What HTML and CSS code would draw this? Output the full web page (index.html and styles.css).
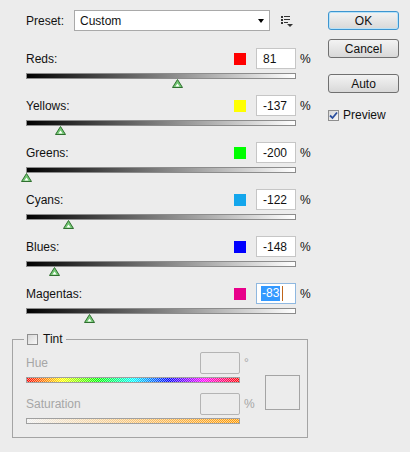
FILE: index.html
```html
<!DOCTYPE html>
<html lang="en">
<head>
  <meta charset="UTF-8">
  <title>Black &amp; White</title>
  <link rel="stylesheet" href="styles.css">
</head>
<body>

  <div class="dialog">
    <div class="main">

      <div class="preset-row">
        <span class="preset-label">Preset:</span>
        <div class="select">
          <span class="select-value">Custom</span>
          <span class="select-arrow"></span>
        </div>
        <svg class="preset-menu" width="12" height="12" viewBox="0 0 12 12">
          <g fill="#333">
            <rect x="0" y="0" width="2" height="2"/>
            <rect x="3" y="0" width="6" height="1"/>
            <rect x="0" y="3" width="2" height="2"/>
            <rect x="3" y="3" width="6" height="1"/>
            <rect x="0" y="6" width="2" height="2"/>
            <rect x="3" y="6" width="4" height="1"/>
            <path d="M6 8h6l-3 3z"/>
          </g>
        </svg>
      </div>

      <div class="channels">
        <div class="channel">
          <div class="channel-head">
            <span class="channel-name">Reds:</span>
            <span class="swatch swatch-reds"></span>
            <span class="field">81</span>
            <span class="unit">%</span>
          </div>
          <div class="slider">
            <svg class="thumb" style="left:145px" width="11" height="9" viewBox="0 0 11 9"><path d="M5.5 .5 10.5 8.5H.5Z" fill="#74c874" stroke="#2f6f2f"/><path d="M5.5 4.5 7.5 7.5H3.5Z" fill="#fff"/></svg>
          </div>
        </div>

        <div class="channel">
          <div class="channel-head">
            <span class="channel-name">Yellows:</span>
            <span class="swatch swatch-yellows"></span>
            <span class="field">-137</span>
            <span class="unit">%</span>
          </div>
          <div class="slider">
            <svg class="thumb" style="left:28px" width="11" height="9" viewBox="0 0 11 9"><path d="M5.5 .5 10.5 8.5H.5Z" fill="#74c874" stroke="#2f6f2f"/><path d="M5.5 4.5 7.5 7.5H3.5Z" fill="#fff"/></svg>
          </div>
        </div>

        <div class="channel">
          <div class="channel-head">
            <span class="channel-name">Greens:</span>
            <span class="swatch swatch-greens"></span>
            <span class="field">-200</span>
            <span class="unit">%</span>
          </div>
          <div class="slider">
            <svg class="thumb" style="left:-6px" width="11" height="9" viewBox="0 0 11 9"><path d="M5.5 .5 10.5 8.5H.5Z" fill="#74c874" stroke="#2f6f2f"/><path d="M5.5 4.5 7.5 7.5H3.5Z" fill="#fff"/></svg>
          </div>
        </div>

        <div class="channel">
          <div class="channel-head">
            <span class="channel-name">Cyans:</span>
            <span class="swatch swatch-cyans"></span>
            <span class="field">-122</span>
            <span class="unit">%</span>
          </div>
          <div class="slider">
            <svg class="thumb" style="left:36px" width="11" height="9" viewBox="0 0 11 9"><path d="M5.5 .5 10.5 8.5H.5Z" fill="#74c874" stroke="#2f6f2f"/><path d="M5.5 4.5 7.5 7.5H3.5Z" fill="#fff"/></svg>
          </div>
        </div>

        <div class="channel">
          <div class="channel-head">
            <span class="channel-name">Blues:</span>
            <span class="swatch swatch-blues"></span>
            <span class="field">-148</span>
            <span class="unit">%</span>
          </div>
          <div class="slider">
            <svg class="thumb" style="left:22px" width="11" height="9" viewBox="0 0 11 9"><path d="M5.5 .5 10.5 8.5H.5Z" fill="#74c874" stroke="#2f6f2f"/><path d="M5.5 4.5 7.5 7.5H3.5Z" fill="#fff"/></svg>
          </div>
        </div>

        <div class="channel">
          <div class="channel-head">
            <span class="channel-name">Magentas:</span>
            <span class="swatch swatch-magentas"></span>
            <span class="field field-focus"><span class="selected">-83</span><span class="caret"></span></span>
            <span class="unit">%</span>
          </div>
          <div class="slider">
            <svg class="thumb" style="left:57px" width="11" height="9" viewBox="0 0 11 9"><path d="M5.5 .5 10.5 8.5H.5Z" fill="#74c874" stroke="#2f6f2f"/><path d="M5.5 4.5 7.5 7.5H3.5Z" fill="#fff"/></svg>
          </div>
        </div>
      </div>

      <fieldset class="tint">
        <legend class="tint-legend">
          <span class="checkbox"></span>
          <span class="tint-title">Tint</span>
        </legend>
        <div class="tint-body">
          <div class="tint-controls">
            <div class="tint-head">
              <span class="tint-label">Hue</span>
              <span class="tint-field"></span>
              <span class="tint-unit">&deg;</span>
            </div>
            <div class="tint-bar hue-bar"></div>
            <div class="tint-head tint-head-sat">
              <span class="tint-label">Saturation</span>
              <span class="tint-field"></span>
              <span class="tint-unit">%</span>
            </div>
            <div class="tint-bar sat-bar"></div>
          </div>
          <div class="tint-preview"></div>
        </div>
      </fieldset>

    </div>

    <div class="actions">
      <div class="btn btn-default">OK</div>
      <div class="btn btn-cancel">Cancel</div>
      <div class="btn btn-auto">Auto</div>
      <div class="preview-row">
        <span class="checkbox checkbox-on">
          <svg width="9" height="9" viewBox="0 0 9 9"><path d="M1 4.5 3.5 7 8 1.5" fill="none" stroke="#2b4f9e" stroke-width="1.8"/></svg>
        </span>
        <span>Preview</span>
      </div>
    </div>
  </div>

</body>
</html>
```

FILE: styles.css
```css
body {
  margin: 0;
  background-color: #ececec;
  font-family: 'Liberation Sans', Arial, sans-serif;
  font-size: 12px;
  color: #111;
}

.dialog {
  display: flex;
  width: 410px;
  height: 452px;
}

.main {
  box-sizing: border-box;
  width: 328px;
  padding: 10px 0 0 12px;
}

/* preset row */

.preset-row {
  display: flex;
  align-items: center;
  height: 21px;
  padding-left: 14px;
}

.preset-label {
  width: 48px;
}

.select {
  box-sizing: border-box;
  display: flex;
  align-items: center;
  width: 196px;
  height: 21px;
  padding: 0 5px 0 5px;
  background-color: #fff;
  border: 1px solid #a9a9a9;
}

.select-value {
  flex: 1;
}

.select-arrow {
  width: 0;
  height: 0;
  margin-top: 1px;
  border-top: 4px solid #000;
  border-left: 3.5px solid transparent;
  border-right: 3.5px solid transparent;
}

.preset-menu {
  margin-left: 11px;
  margin-top: 3px;
}

/* channel sliders */

.channels {
  margin-top: 17px;
  padding-left: 14px;
}

.channel {
  height: 47px;
}

.channel-head {
  display: flex;
  align-items: center;
  width: 284px;
  height: 21px;
}

.channel-name {
  flex: 1;
}

.swatch {
  width: 12px;
  height: 12px;
  margin-right: 10px;
}

.swatch-reds { background-color: #ff0000; }
.swatch-yellows { background-color: #ffff00; }
.swatch-greens { background-color: #00ff00; }
.swatch-cyans { background-color: #14a6ec; }
.swatch-blues { background-color: #0000ff; }
.swatch-magentas { background-color: #e8008a; }

.field {
  box-sizing: border-box;
  display: flex;
  align-items: center;
  width: 40px;
  height: 21px;
  padding-left: 6px;
  background-color: #fff;
  border: 1px solid #c6c6c6;
}

.field-focus {
  padding-left: 4px;
  border-color: #8fb8e0;
}

.selected {
  padding: 1px 1px;
  line-height: 13px;
  background-color: #3399ff;
  color: #fff;
}

.caret {
  width: 1px;
  height: 15px;
  margin-left: 2px;
  background-color: #c0651a;
}

.unit {
  width: 14px;
  padding-left: 4px;
  box-sizing: border-box;
}

.slider {
  position: relative;
  box-sizing: border-box;
  width: 270px;
  height: 6px;
  margin-top: 4px;
  border: 1px solid #8c8c8c;
  background: linear-gradient(to right, #000, #fff);
}

.thumb {
  position: absolute;
  top: 5px;
  display: block;
}

/* tint group */

.tint {
  box-sizing: border-box;
  width: 296px;
  margin: 2px 0 0 0;
  padding: 6px 0 13px 13px;
  border: 1px solid #a4a4a4;
}

.tint-legend {
  display: flex;
  align-items: center;
  height: 14px;
  padding: 0 3px;
  margin-left: -2px;
}

.checkbox {
  box-sizing: border-box;
  display: flex;
  align-items: center;
  justify-content: center;
  width: 11px;
  height: 11px;
  border: 1px solid #8f8f8f;
  background: linear-gradient(135deg, #d8d8d8, #f8f8f8);
}

.tint-title {
  margin-left: 5px;
}

.tint-body {
  display: flex;
}

.tint-controls {
  width: 226px;
}

.tint-head {
  display: flex;
  align-items: center;
  height: 22px;
  color: #a6a6a6;
}

.tint-head-sat {
  margin-top: 10px;
}

.tint-label {
  flex: 1;
}

.tint-field {
  box-sizing: border-box;
  width: 40px;
  height: 22px;
  border: 1px solid #b4b4b4;
  border-radius: 2px;
}

.tint-unit {
  width: 12px;
  padding-left: 4px;
  box-sizing: border-box;
}

.tint-bar {
  box-sizing: border-box;
  width: 214px;
  height: 6px;
  margin-top: 3px;
  border: 1px solid #a0a0a0;
}

.hue-bar {
  background:
    repeating-conic-gradient(rgba(255,255,255,0.55) 0 25%, transparent 0 50%) 0 0 / 2px 2px,
    linear-gradient(to right, #ff0000, #ffff00, #00ff00, #00ffff, #0000ff, #ff00ff, #ff0000);
}

.sat-bar {
  background:
    repeating-conic-gradient(rgba(255,255,255,0.55) 0 25%, transparent 0 50%) 0 0 / 2px 2px,
    linear-gradient(to right, #f0f0f0, #ff9a00);
}

.tint-preview {
  box-sizing: border-box;
  width: 35px;
  height: 35px;
  margin: 23px 0 0 13px;
  border: 1px solid #a4a4a4;
}

/* buttons */

.actions {
  width: 71px;
  padding-top: 11px;
}

.btn {
  box-sizing: border-box;
  display: flex;
  align-items: center;
  justify-content: center;
  height: 19px;
  border: 1px solid #707070;
  border-radius: 3px;
  background: linear-gradient(#f3f3f3, #e6e6e6 50%, #d8d8d8);
}

.btn-default {
  border-color: #3d95d0;
  box-shadow: inset 0 0 0 1px #b8e2f8;
}

.btn-cancel {
  margin-top: 9px;
}

.btn-auto {
  margin-top: 16px;
}

.preview-row {
  display: flex;
  align-items: center;
  margin-top: 15px;
  gap: 4px;
}

.checkbox-on svg {
  display: block;
}
```
